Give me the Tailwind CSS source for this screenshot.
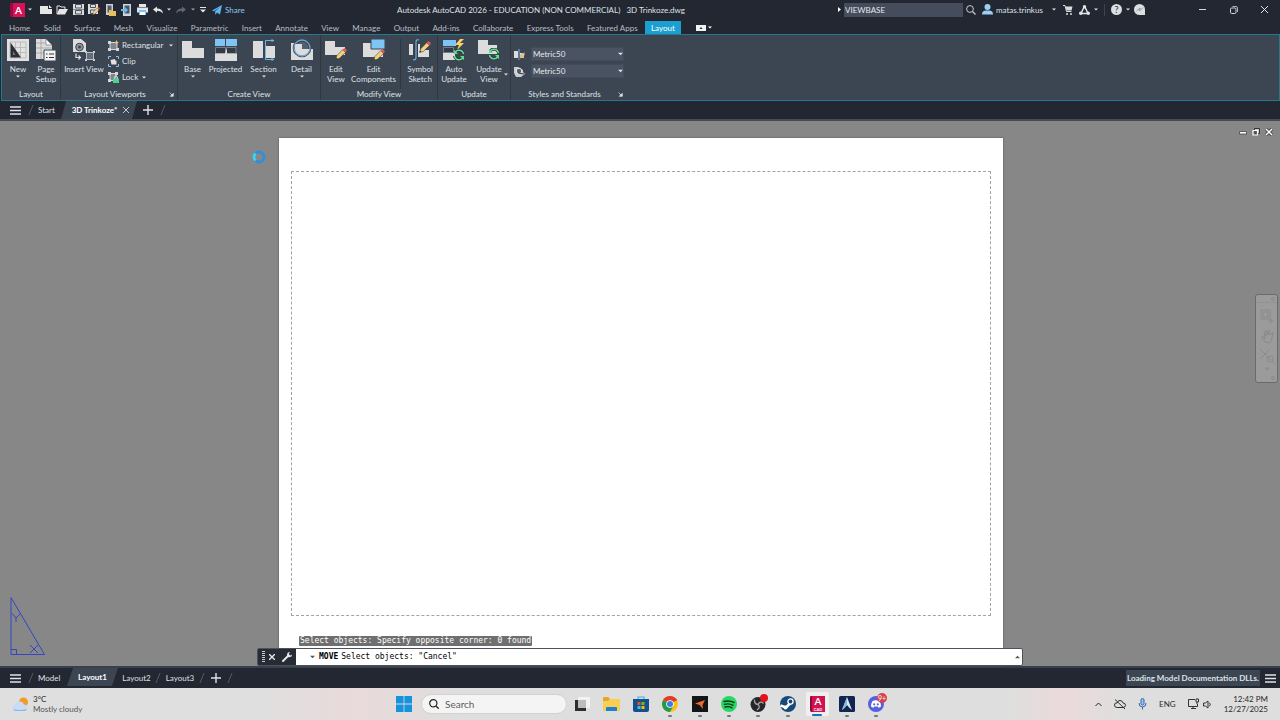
<!DOCTYPE html>
<html lang="en">
<head>
  <meta charset="UTF-8">
  <meta name="viewport" content="width=device-width, initial-scale=1.0">
  <title>Autodesk AutoCAD 2026 - 3D Trinkoze.dwg</title>
  <script src="https://cdn.jsdelivr.net/npm/@tailwindcss/browser@4"></script>
</head>
<body class="h-screen flex flex-col overflow-hidden bg-[#222731] text-[#dfe2e6] text-[8px] leading-[10px] font-['Lato','Open_Sans',sans-serif]">

  <!-- Shared symbols -->
  <svg class="hidden">
    <symbol id="caret" viewBox="0 0 4 3"><path d="M0 .5h4L2 2.5z" fill="currentColor"/></symbol>
    <symbol id="burger" viewBox="0 0 11 9"><path d="M0 1h11M0 4.5h11M0 8h11" stroke="currentColor" stroke-width="1.4"/></symbol>
    <symbol id="slash" viewBox="0 0 6 12"><path d="M1 11L5 1" stroke="#525a67" stroke-width="1"/></symbol>
    <symbol id="plus" viewBox="0 0 10 10"><path d="M5 0v10M0 5h10" stroke="currentColor" stroke-width="1.4"/></symbol>
    <symbol id="pencil" viewBox="0 0 11 11"><path d="M.5 10.5L1.6 7 7 1.6 9.6 4.1 4.1 9.5z" fill="#f5cf7d" stroke="#2c323c" stroke-width=".5"/><path d="M7 1.6L8.2.5q.8-.5 1.6.2l.7.7q.6.8 0 1.5L9.6 4.1z" fill="#e4574f"/><path d="M.5 10.5l.6-1.8 1.2 1.2z" fill="#2c323c"/></symbol>
    <symbol id="refresh" viewBox="0 0 12 12"><path d="M10.6 5A4.8 4.8 0 0 0 2 3.2M1.4 7A4.8 4.8 0 0 0 10 8.8" fill="none" stroke="#2c323c" stroke-width="3"/><path d="M10.6 5A4.8 4.8 0 0 0 2 3.2M1.4 7A4.8 4.8 0 0 0 10 8.8" fill="none" stroke="#5fdc8c" stroke-width="1.5"/><path d="M1 .8V5h4zM11 11.2V7H7z" fill="#5fdc8c"/></symbol>
    <symbol id="launcher" viewBox="0 0 5 5"><path d="M.5.5l3 3M4.3 1.3v3h-3z" fill="currentColor" stroke="currentColor" stroke-width=".7"/></symbol>
  </svg>

  <!-- Title bar -->
  <header class="h-[19px] shrink-0 flex items-center">
    <div class="w-[246px] flex items-center pl-[10px]">
      <button aria-label="Application menu" class="flex items-center gap-[2px] w-[28px]">
        <svg class="w-4 h-[14px]" viewBox="0 0 16 14"><path d="M1 0h14v14H1l-1-2V1z" fill="#d81159"/><path d="M0 1l1-1h2v14H1l-1-2z" fill="#9d0b3e"/><text x="8.5" y="10.5" text-anchor="middle" font-size="10" font-weight="700" fill="#fff">A</text></svg>
        <svg class="w-1 h-[3px]"><use href="#caret"/></svg>
      </button>
      <button aria-label="New" class="w-4 flex justify-center"><svg class="w-3 h-[10px]" viewBox="0 0 12 10"><path d="M0 1h8v3h4v5H0z" fill="#e6e6e6"/><path d="M9 0l3 3H9z" fill="#e6e6e6"/></svg></button>
      <button aria-label="Open" class="w-4 flex justify-center"><svg class="w-3 h-[10px]" viewBox="0 0 12 10"><path d="M1 9V1h3l1 1h4v2" fill="none" stroke="#e6e6e6"/><path d="M3 4h9L9 9.500H.8z" fill="#e6e6e6"/></svg></button>
      <button aria-label="Save" class="w-4 flex justify-center"><svg class="w-[11px] h-[11px]" viewBox="0 0 11 11"><path d="M0 0h11v11H0z" fill="#dcdcdc"/><path d="M2.500.500h6v3.500h-6zM2.500 6.500h6V10h-6z" fill="#dcdcdc" stroke="#4a515c"/><path d="M0 5.500h11" stroke="#4a515c" stroke-width=".6"/></svg></button>
      <button aria-label="Save as" class="w-4 flex justify-center"><svg class="w-3 h-[11px]" viewBox="0 0 12 11"><path d="M0 0h10v10H0z" fill="#dcdcdc"/><path d="M2.500.500h5v3h-5zM2.500 6h5v3.500h-5z" fill="#dcdcdc" stroke="#4a515c"/><use href="#pencil" x="4" y="3" width="8" height="8"/></svg></button>
      <button aria-label="Open from web" class="w-4 flex justify-center"><svg class="w-[11px] h-[12px]" viewBox="0 0 11 12"><path d="M1 0h7v11H1z" fill="#cfcfcf"/><path d="M2.500 1.500h4v7h-4z" fill="#555b66"/><path d="M4 6h2l1 1h4v5H4z" fill="#e9bf5e"/></svg></button>
      <button aria-label="Save to web" class="w-4 flex justify-center"><svg class="w-[10px] h-[12px]" viewBox="0 0 10 12"><path d="M2 0h8v12H2z" fill="#cfd6dc"/><path d="M3.500 1.500h5v8h-5z" fill="#3f5870"/><path d="M0 5h4V3l3 3-3 3V7H0z" fill="#6bb8ee"/></svg></button>
      <button aria-label="Plot" class="w-4 flex justify-center"><svg class="w-[11px] h-[11px]" viewBox="0 0 11 11"><path d="M2 0h7v3H2zM0 3.500h11v5H0z" fill="#e6e6e6"/><path d="M2 6h7v5H2z" fill="#7cc5f5"/><path d="M3 8h5v3H3z" fill="#fff"/></svg></button>
      <button aria-label="Undo" class="w-4 flex justify-center"><svg class="w-[10px] h-[8px]" viewBox="0 0 10 8"><path d="M0 3.500L4 .500V2.500Q9.500 2.500 10 7.500 8 4.500 4 4.700v2z" fill="#e6e6e6"/></svg></button>
      <svg class="w-1 h-[3px] mx-[1px]"><use href="#caret"/></svg>
      <button aria-label="Redo" class="w-[18px] flex justify-center text-[#606874]"><svg class="w-[10px] h-[8px]" viewBox="0 0 10 8"><path d="M10 3.500L6 .500V2.500Q.500 2.500 0 7.500 2 4.500 6 4.700v2z" fill="currentColor"/></svg></button>
      <svg class="w-1 h-[3px] mx-[1px] text-[#9aa0a9]"><use href="#caret"/></svg>
      <button aria-label="Customize quick access" class="w-[14px] flex justify-center"><svg class="w-[6px] h-[6px]" viewBox="0 0 6 6"><path d="M0 .500h6" stroke="#e6e6e6"/><path d="M0 2.500h6l-3 3z" fill="#e6e6e6"/></svg></button>
      <button class="flex items-center gap-[3px] ml-[2px] text-[#8cc8f0]"><svg class="w-[10px] h-[10px]" viewBox="0 0 10 10"><path d="M0 5.500L10 0 8 9.500 5 7.500 3.500 10 3 6.500 8 2 2 6.300z" fill="#5fb8f0"/></svg>Share</button>
    </div>
    <h1 class="flex-1 text-center whitespace-pre">Autodesk AutoCAD 2026 - EDUCATION (NON COMMERCIAL)   3D Trinkoze.dwg</h1>
    <div class="w-[444px] flex items-center">
      <button aria-label="Collapse search" class="w-2 pl-[2px]"><svg class="w-[3px] h-[5px]" viewBox="0 0 3 5"><path d="M0 0l3 2.500L0 5z" fill="#fff"/></svg></button>
      <input aria-label="Search" value="VIEWBASE" class="w-[119px] h-[14px] px-px bg-[#454d5c] text-[#e6e9ed]">
      <button aria-label="Find" class="w-4 flex justify-center"><svg class="w-[10px] h-[10px]" viewBox="0 0 10 10"><circle cx="4" cy="4" r="3.400" fill="none" stroke="#c9cdd2"/><path d="M6.500 6.500L9.500 9.500" stroke="#c9cdd2" stroke-width="1.300"/></svg></button>
      <button class="w-[67px] ml-[3px] flex items-center gap-[3px]"><svg class="w-[11px] h-[11px]" viewBox="0 0 11 11"><circle cx="5.500" cy="3" r="3" fill="#9bd0f5"/><path d="M0 10.500Q0 6.500 4 6.500h3q4 0 4 4z" fill="#9bd0f5"/></svg>matas.trinkus</button>
      <svg class="w-1 h-[3px] ml-[3px] mr-[7px]"><use href="#caret"/></svg>
      <button aria-label="App store" class="w-[10px]"><svg class="w-[10px] h-[10px]" viewBox="0 0 10 10"><path d="M0 .500h2l1.500 6h5" fill="none" stroke="#d9dbde"/><path d="M2.500 1.500H9.500L8.500 5.500h-5z" fill="#d9dbde"/><circle cx="4" cy="9" r="1" fill="#d9dbde"/><circle cx="8" cy="9" r="1" fill="#d9dbde"/></svg></button>
      <button aria-label="Autodesk app" class="ml-[6px] flex items-center gap-1"><svg class="w-[11px] h-[10px]" viewBox="0 0 11 10"><path d="M5.500 1L2 8.500M5.500 1L9 8.500M2 8.500h7" fill="none" stroke="#e3e5e8" stroke-width="1.500"/><circle cx="5.500" cy="1.700" r="1.700" fill="#e3e5e8"/><circle cx="1.700" cy="8.300" r="1.700" fill="#e3e5e8"/><circle cx="9.300" cy="8.300" r="1.700" fill="#e3e5e8"/></svg><svg class="w-1 h-[3px]"><use href="#caret"/></svg></button>
      <div class="w-px h-3 bg-[#3d4450] mx-[6px]"></div>
      <button aria-label="Help" class="flex items-center gap-1"><svg class="w-[11px] h-[11px]" viewBox="0 0 11 11"><circle cx="5.500" cy="5.500" r="5.500" fill="#dcdee1"/><text x="5.500" y="8.500" font-size="9" text-anchor="middle" fill="#2b303a">?</text></svg><svg class="w-1 h-[3px]"><use href="#caret"/></svg></button>
      <button aria-label="Assistant" class="ml-1"><svg class="w-[11px] h-[11px]" viewBox="0 0 11 11"><path d="M5.500 0A5.500 5.500 0 0 0 5.500 11H11V5.500A5.500 5.500 0 0 0 5.500 0z" fill="#dcdee1"/><path d="M2.500 7L6 4l-.5 3L9 3.500" fill="none" stroke="#9297a0"/></svg></button>
      <div class="ml-auto flex">
        <button aria-label="Minimize" class="w-[31px] flex justify-center items-center"><svg class="w-[7px] h-[7px]" viewBox="0 0 7 7"><path d="M0 3.500h7" stroke="#d5d7da"/></svg></button>
        <button aria-label="Restore" class="w-[31px] flex justify-center items-center"><svg class="w-[8px] h-[8px]" viewBox="0 0 8 8"><rect x=".5" y="2" width="5.500" height="5.500" rx="1.200" fill="none" stroke="#d5d7da"/><path d="M2.500.500H6Q7.500.500 7.500 2v4" fill="none" stroke="#d5d7da" stroke-width=".8"/></svg></button>
        <button aria-label="Close" class="w-[31px] flex justify-center items-center"><svg class="w-[7px] h-[7px]" viewBox="0 0 7 7"><path d="M0 0l7 7M7 0L0 7" stroke="#e3e5e8"/></svg></button>
      </div>
    </div>
  </header>

  <!-- Ribbon tabs -->
  <nav class="h-[15px] shrink-0 flex items-end text-[#b9bec6]">
    <div class="w-[681px] pl-[2px] flex justify-between">
      <button class="h-[13px] pl-[7px]">Home</button>
      <button class="h-[13px]">Solid</button>
      <button class="h-[13px]">Surface</button>
      <button class="h-[13px]">Mesh</button>
      <button class="h-[13px]">Visualize</button>
      <button class="h-[13px]">Parametric</button>
      <button class="h-[13px]">Insert</button>
      <button class="h-[13px]">Annotate</button>
      <button class="h-[13px]">View</button>
      <button class="h-[13px]">Manage</button>
      <button class="h-[13px]">Output</button>
      <button class="h-[13px]">Add-ins</button>
      <button class="h-[13px]">Collaborate</button>
      <button class="h-[13px]">Express Tools</button>
      <button class="h-[13px]">Featured Apps</button>
      <button class="h-[13px] px-[6px] ml-[-6px] bg-[#1b9fd0] text-white">Layout</button>
    </div>
    <button aria-label="Minimize ribbon" class="h-[13px] ml-[15px] flex items-center gap-[2px]"><svg class="w-[10px] h-[6px]" viewBox="0 0 10 6"><path d="M0 0h10v6H0z" fill="#f2f2f2"/><path d="M3.500 4L5 2l1.500 2z" fill="#222731"/></svg><svg class="w-1 h-[3px] text-white"><use href="#caret"/></svg></button>
  </nav>

  <!-- Ribbon -->
  <section class="h-[67px] shrink-0 flex bg-[#3c4552] border border-[#26788c] ml-px">
    <div class="w-[59px] border-r border-[#2f3742] flex flex-col">
      <div class="flex-1 flex pt-1 pl-[2px]">
        <button class="w-7 flex flex-col items-center">
          <svg class="w-[22px] h-[22px] mb-[3px]" viewBox="0 0 22 22"><path d="M0 0h22v22H0z" fill="#e2e2e2"/><path d="M3 3h16v16H3zM3 8.500h16M3 13.500h16M8.500 3v16M13.500 3v16" fill="none" stroke="#b4b4b4" stroke-width=".8"/><path d="M3.500 3.500L14 18.500H3.500z" fill="#2b2f36"/><path d="M6 12l2.500 4H6z" fill="#777"/></svg>
          New<svg class="w-1 h-[3px] mt-[1px]"><use href="#caret"/></svg>
        </button>
        <button class="w-7 flex flex-col items-center">
          <svg class="w-[20px] h-[22px] mb-[3px]" viewBox="0 0 20 22"><path d="M0 0h10l6 6v14H0z" fill="#dcdcdc"/><path d="M10 0v6h6z" fill="#fff" stroke="#59616d" stroke-width=".6"/><path d="M0 4h9M0 9h16M0 14h8M5 0v20" stroke="#9a9a9a" stroke-width=".7"/><path d="M8 11h12v11H8z" fill="#f2f2f2" stroke="#3c4552"/><path d="M10 15h1.500M13 15h5M10 18.500h1.500M13 18.500h5" stroke="#333"/></svg>
          <span>Page<br>Setup</span>
        </button>
      </div>
      <div class="h-[11px] text-center">Layout</div>
    </div>

    <div class="w-[117px] border-r border-[#2f3742] flex flex-col">
      <div class="flex-1 flex pt-1 pl-px">
        <button class="w-[44px] flex flex-col items-center whitespace-nowrap">
          <svg class="w-[22px] h-[22px] mb-[3px]" viewBox="0 0 22 22"><path d="M0 0h8l5 4v9H0z" fill="#dcdcdc"/><circle cx="6.500" cy="8" r="3.800" fill="#8e959f" stroke="#3c4552"/><circle cx="6.500" cy="8" r="1.500" fill="#3c4552"/><path d="M3 14.500v4h4M5.500 16.500l2 2-2 2" fill="none" stroke="#e2e2e2" stroke-width="1.200"/><path d="M13.500 13.500h7v7h-7z" fill="#666e79" stroke="#b9bdc3"/><path d="M12 12h2v2h-2zM20 12h2v2h-2zM12 20h2v2h-2zM20 20h2v2h-2z" fill="#c9ccd0"/></svg>
          Insert View
        </button>
        <div class="flex flex-col pl-[2px] gap-1">
          <button class="h-3 flex items-center gap-[3px]"><svg class="w-[11px] h-[11px]" viewBox="0 0 11 11"><path d="M2 2.500h7v7H2z" fill="#7d858f" stroke="#d5d7da"/><path d="M0 1h3v3H0zM0 8h3v3H0zM8 8h3v3H8z" fill="#d5d7da"/><path d="M8.500 0l.8 1.700 1.700.8-1.700.8-.8 1.700-.8-1.700-1.700-.8 1.700-.8z" fill="#ffbf60"/></svg>Rectangular<svg class="w-1 h-[3px] ml-[2px]"><use href="#caret"/></svg></button>
          <button class="h-3 flex items-center gap-[3px]"><svg class="w-[11px] h-[11px]" viewBox="0 0 11 11"><path d="M.500 3V.500H3M8 .500h2.500V3M10.500 8v2.500H8M3 10.500H.500V8" fill="none" stroke="#85c5f0"/><path d="M2.500 4L7 3v1.500h1.500v4h-5z" fill="#e2e2e2"/></svg>Clip</button>
          <button class="h-3 flex items-center gap-[3px]"><svg class="w-[11px] h-[11px]" viewBox="0 0 11 11"><path d="M2 1.500h6v7H2z" fill="#7d858f" stroke="#d5d7da"/><path d="M0 0h3v3H0zM7 0h3v3H7zM0 7h3v3H0z" fill="#d5d7da"/><path d="M6.500 7V5.500q0-1.500 1.500-1.500t1.500 1.500V7" fill="none" stroke="#e2e2e2"/><path d="M5 6.500h6V11H5z" fill="#4fd08b"/></svg>Lock<svg class="w-1 h-[3px] ml-px"><use href="#caret"/></svg></button>
        </div>
      </div>
      <div class="h-[11px] flex items-start"><span class="flex-1 text-center">Layout Viewports</span><button aria-label="Viewport settings" class="pt-[3px] pr-[3px]"><svg class="w-[5px] h-[5px]"><use href="#launcher"/></svg></button></div>
    </div>

    <div class="w-[143px] border-r border-[#2f3742] flex flex-col">
      <div class="flex-1 flex pt-1">
        <button class="w-[29px] flex flex-col items-center">
          <svg class="w-[22px] h-[22px] mb-[3px]" viewBox="0 0 22 22"><path d="M0 2h10v7h12v10H0z" fill="#dcdcdc"/></svg>
          Base<svg class="w-1 h-[3px] mt-[1px]"><use href="#caret"/></svg>
        </button>
        <button class="w-[37px] flex flex-col items-center">
          <svg class="w-[22px] h-[22px] mb-[3px]" viewBox="0 0 22 22"><path d="M0 0h10v7H0zM11 0h11v7H11z" fill="#7cc5f5"/><path d="M.500 8.500h10v6H.500zM11.500 8.500h9.500v6h-9.500z" fill="#343b46" stroke="#747c87"/><path d="M0 14.500h10l1-4h1v4h10V22H0z" fill="#dcdcdc"/></svg>
          Projected
        </button>
        <button class="w-[39px] flex flex-col items-center">
          <svg class="w-[22px] h-[22px] mb-[3px]" viewBox="0 0 22 22"><path d="M0 2h10v5h12v12H0z" fill="#dcdcdc"/><path d="M11 2v18" stroke="#3c4552" stroke-width="2"/><path d="M12.500 1.500v19M12.500 1.500h8M12.500 20.500h8" fill="none" stroke="#6fb6e8"/><path d="M18.500 0l3 1.500-3 1.700zM18.500 18.800l3 1.700-3 1.500z" fill="#6fb6e8"/></svg>
          Section<svg class="w-1 h-[3px] mt-[1px]"><use href="#caret"/></svg>
        </button>
        <button class="w-[37px] flex flex-col items-center">
          <svg class="w-[22px] h-[22px] mb-[3px]" viewBox="0 0 22 22"><path d="M0 4h8v6h14v11H0z" fill="#dcdcdc"/><circle cx="11" cy="9" r="7.800" fill="#565e6a" stroke="#3c4552" stroke-width="3"/><path d="M4 5h7v5h7.500a7.500 7.500 0 0 1-14.500 2z" fill="#dcdcdc"/><circle cx="11" cy="9" r="8" fill="none" stroke="#6ba6d8" stroke-width="1.300"/></svg>
          Detail<svg class="w-1 h-[3px] mt-[1px]"><use href="#caret"/></svg>
        </button>
      </div>
      <div class="h-[11px] text-center">Create View</div>
    </div>

    <div class="w-[117px] border-r border-[#2f3742] flex flex-col">
      <div class="flex-1 flex pt-1">
        <button class="w-[30px] flex flex-col items-center">
          <svg class="w-[22px] h-[22px] mb-[3px]" viewBox="0 0 22 22"><path d="M0 2h10v6h10v8H0z" fill="#dcdcdc"/><use href="#pencil" x="10" y="9" width="12" height="12"/></svg>
          <span>Edit<br>View</span>
        </button>
        <button class="w-[46px] flex flex-col items-center">
          <svg class="w-[22px] h-[22px] mb-[3px]" viewBox="0 0 22 22"><path d="M0 4h9v6h11v8H0z" fill="#dcdcdc"/><path d="M8 0h14v10H8z" fill="#7cc5f5" stroke="#3c4552"/><use href="#pencil" x="10" y="10" width="12" height="12"/></svg>
          <span>Edit<br>Components</span>
        </button>
        <div class="w-px bg-[#2f3742] ml-1"></div>
        <button class="w-[36px] pl-[2px] flex flex-col items-center">
          <svg class="w-[22px] h-[22px] mb-[3px]" viewBox="0 0 22 22"><path d="M0 5h4v11H0zM9 5h2v6h9v7H9z" fill="#dcdcdc"/><path d="M5 2h4v17H5z" fill="#343b46"/><path d="M10 1q-3-1-3 2v15q0 4-3 2.500" fill="none" stroke="#6fb6e8" stroke-width="1.200"/><use href="#pencil" x="10" y="2" width="12" height="12"/></svg>
          <span>Symbol<br>Sketch</span>
        </button>
      </div>
      <div class="h-[11px] text-center">Modify View</div>
    </div>

    <div class="w-[73px] border-r border-[#2f3742] flex flex-col">
      <div class="flex-1 flex pt-1">
        <button class="w-[32px] flex flex-col items-center">
          <svg class="w-[22px] h-[22px] mb-[3px]" viewBox="0 0 22 22"><path d="M0 1h13v6H0z" fill="#7cc5f5"/><path d="M.500 8.500h10v5H.500z" fill="#343b46" stroke="#747c87"/><path d="M0 14h12v7H0z" fill="#dcdcdc"/><path d="M17 0l-5 6h4l-2 5 7-7h-4l4-4z" fill="#fbcf6c"/><use href="#refresh" x="10" y="10" width="12" height="12"/></svg>
          <span>Auto<br>Update</span>
        </button>
        <button class="w-[38px] flex flex-col items-center relative">
          <svg class="w-[22px] h-[22px] mb-[3px]" viewBox="0 0 22 22"><path d="M0 1h10v5h9v9H0z" fill="#dcdcdc"/><use href="#refresh" x="10" y="9" width="12" height="12"/></svg>
          <span>Update<br>View</span><svg class="w-1 h-[3px] absolute right-0 top-[34px]"><use href="#caret"/></svg>
        </button>
      </div>
      <div class="h-[11px] text-center">Update</div>
    </div>

    <div class="w-[115px] flex flex-col">
      <div class="flex-1 pt-3 pl-[3px] flex flex-col gap-[3px]">
        <label class="flex items-center gap-[6px] relative"><svg class="w-[11px] h-[11px]" viewBox="0 0 11 11"><path d="M0 2h4v7H0zM6 4h4v5H6z" fill="#dcdcdc"/><path d="M5 0v11" stroke="#6fb6e8"/><use href="#pencil" x="5" y="3" width="7" height="7"/></svg>
          <select aria-label="Section view style" class="appearance-none w-[93px] h-[14px] px-px bg-[#4a5362] border border-[#424b59] text-[#e6e9ed]"><option>Metric50</option></select>
          <svg class="w-[5px] h-1 absolute right-[3px] top-[5px] pointer-events-none"><use href="#caret"/></svg></label>
        <label class="flex items-center gap-[6px] relative"><svg class="w-[11px] h-[11px]" viewBox="0 0 11 11"><path d="M0 1h4l5 3v2l2 2-4 3H2L0 7z" fill="#c9ccd0"/><circle cx="5" cy="5" r="2.800" fill="#565e6a" stroke="#eee"/><path d="M4 7l6 1" stroke="#343b46"/></svg>
          <select aria-label="Detail view style" class="appearance-none w-[93px] h-[14px] px-px bg-[#4a5362] border border-[#424b59] text-[#e6e9ed]"><option>Metric50</option></select>
          <svg class="w-[5px] h-1 absolute right-[3px] top-[5px] pointer-events-none"><use href="#caret"/></svg></label>
      </div>
      <div class="h-[11px] flex items-start"><span class="flex-1 text-center">Styles and Standards</span><button aria-label="Styles settings" class="pt-[3px] pr-[3px]"><svg class="w-[5px] h-[5px]"><use href="#launcher"/></svg></button></div>
    </div>
  </section>

  <!-- File tabs -->
  <nav class="h-[20px] shrink-0 flex items-center pl-[10px] border-b-2 border-[#444c56]">
    <button aria-label="File tab menu"><svg class="w-[11px] h-[9px]"><use href="#burger"/></svg></button>
    <svg class="w-[6px] h-3 ml-[7px] mr-1"><use href="#slash"/></svg>
    <button class="w-[23px] text-left">Start</button>
    <div class="h-[18px] w-[76px] pl-[3px] flex items-center justify-center gap-[6px] bg-[#3c4552] [clip-path:polygon(5px_0,100%_0,calc(100%-5px)_100%,0_100%)]"><button class="font-bold text-white whitespace-nowrap">3D Trinkoze*</button><button aria-label="Close tab"><svg class="w-[6px] h-[6px]" viewBox="0 0 6 6"><path d="M0 0l6 6M6 0L0 6" stroke="#c4c8ce"/></svg></button></div>
    <button aria-label="New tab" class="ml-[6px]"><svg class="w-[10px] h-[10px]"><use href="#plus"/></svg></button>
    <svg class="w-[6px] h-3 ml-[7px]"><use href="#slash"/></svg>
  </nav>

  <!-- Paper space -->
  <main class="flex-1 relative flex justify-center bg-[#878787] pl-[2px] pt-[17px]">
    <div class="w-[724px] bg-white shadow-[0_0_2px_#555] px-3 pt-[33px]">
      <div class="h-[445px] border border-dashed border-[#a3a3a3]"></div>
    </div>

    <!-- Busy cursor -->
    <svg class="absolute left-[252px] top-[29px] w-[14px] h-[14px]" viewBox="0 0 14 14"><circle cx="7" cy="7" r="5" fill="none" stroke="#2f8fdc" stroke-width="3"/><path d="M3.500 10.500A5 5 0 0 1 3.500 3.500" fill="none" stroke="#45d3ea" stroke-width="3"/></svg>

    <!-- Drawing window controls -->
    <div class="absolute right-[7px] top-[7px] flex items-center gap-[5px]">
      <button aria-label="Minimize drawing"><svg class="w-2 h-2" viewBox="0 0 8 8"><path d="M.500 3.500h7v2.500h-7z" fill="#fff" stroke="#444" stroke-width=".8"/></svg></button>
      <button aria-label="Restore drawing"><svg class="w-2 h-2" viewBox="0 0 8 8"><path d="M2.500 .500h5v5h-5z" fill="#ccc" stroke="#333"/><path d="M1 2.500h4.500V7H1z" fill="#555" stroke="#fff" stroke-width="1.200"/></svg></button>
      <button aria-label="Close drawing"><svg class="w-2 h-2" viewBox="0 0 8 8"><path d="M1 1l6 6M7 1L1 7" stroke="#333" stroke-width="3"/><path d="M1 1l6 6M7 1L1 7" stroke="#fff" stroke-width="1.500"/></svg></button>
    </div>

    <!-- Navigation bar -->
    <div class="absolute right-[2px] top-[173px] w-[23px] h-[89px] rounded-[3px] bg-[#9b9b9b] border border-[#6a6a6a]">
      <svg class="w-full h-full" viewBox="0 0 21 87" fill="none" stroke="#8a8a8a"><circle cx="17" cy="4" r="1.500"/><path d="M0 7.500h21" stroke="#929292"/><path d="M5 15h9v9H5zM7 17h5v5H7zM12 26h6M15 23v5M9 47q-4-4-3-6l3 3-1-7 2 4V35l2 5 1-5 1 5 3-3-1 6q-1 4-3 5zM4 54l11 11M14 54L4 64"/><circle cx="14" cy="64" r="3"/><path d="M16 66l3 3M9 73h4l-2 2z"/><circle cx="17" cy="83" r="1.500"/></svg>
    </div>

    <!-- UCS icon -->
    <svg class="absolute left-[10px] bottom-[10px] w-9 h-[60px]" viewBox="0 0 36 60" fill="none" stroke="#3146c4"><path d="M1 1.500V58.500H34.500zM1 53.500h5.500v5M2 17.500l4 4.500 4.500-4.500M6 22v4M20 49l8 8M28 49l-8 8"/></svg>

    <!-- Command line -->
    <div class="absolute left-1/2 -translate-x-1/2 bottom-0 w-[766px] font-['DejaVu_Sans_Mono',monospace]">
      <p class="w-fit ml-[42px] mb-[2px] px-px bg-[#6f6f6f] text-white rounded-[1px]">Select objects: Specify opposite corner: 0 found</p>
      <div class="h-[18px] flex items-center bg-white border border-[#4b525e] rounded-[2px] text-black">
        <div class="h-full w-[38px] bg-[#262b36] flex items-center justify-between px-1">
          <svg class="w-[3px] h-3" viewBox="0 0 3 12"><path d="M0 .500h3M0 2.500h3M0 4.500h3M0 6.500h3M0 8.500h3M0 10.500h3" stroke="#c9ccd0"/></svg>
          <button aria-label="Close command line" class="pr-[3px]"><svg class="w-[6px] h-[6px]" viewBox="0 0 6 6"><path d="M0 0l6 6M6 0L0 6" stroke="#e6e6e6" stroke-width="1.400"/></svg></button>
          <button aria-label="Customize"><svg class="w-[10px] h-[10px]" viewBox="0 0 10 10"><path d="M1 9l5-5" stroke="#e6e6e6" stroke-width="2" stroke-linecap="round"/><path d="M8 0Q5 0 5 3t3 2q2 0 2-2.500L8.300 3.500 6.800 2z" fill="#e6e6e6"/></svg></button>
        </div>
        <svg class="w-[5px] h-1 ml-[14px] mr-1 text-[#555]"><use href="#caret"/></svg>
        <label for="cmd" class="font-bold">MOVE</label>
        <input id="cmd" value='Select objects: "Cancel"' class="flex-1 ml-[3px] bg-transparent">
        <button aria-label="Command history" class="px-[2px]"><svg class="w-[5px] h-1 rotate-180 text-[#555]"><use href="#caret"/></svg></button>
      </div>
    </div>
  </main>

  <!-- Layout tabs and status -->
  <footer class="h-[22px] shrink-0 flex items-center pl-[10px] pr-1 border-t-2 border-[#38404c]">
    <button aria-label="Layout menu"><svg class="w-[11px] h-[9px]"><use href="#burger"/></svg></button>
    <svg class="w-[6px] h-3 ml-[7px] mr-1"><use href="#slash"/></svg>
    <button class="w-[29px] pb-px text-left">Model</button>
    <button class="h-[18px] mb-[2px] w-[51px] font-bold text-white bg-[#3c4552] [clip-path:polygon(6px_0,100%_0,calc(100%-6px)_100%,0_100%)]">Layout1</button>
    <button class="w-[37px] pb-px text-center">Layout2</button>
    <svg class="w-[6px] h-3"><use href="#slash"/></svg>
    <button class="w-[38px] pb-px text-center">Layout3</button>
    <svg class="w-[6px] h-3"><use href="#slash"/></svg>
    <button aria-label="New layout" class="ml-[6px]"><svg class="w-[10px] h-[10px]"><use href="#plus"/></svg></button>
    <svg class="w-[6px] h-3 ml-[6px]"><use href="#slash"/></svg>
    <p class="ml-auto h-4 px-px flex items-center bg-[#3c4552] font-bold">Loading Model Documentation DLLs.</p>
    <button aria-label="Customization" class="ml-[5px]"><svg class="w-[11px] h-[9px]"><use href="#burger"/></svg></button>
  </footer>

  <!-- Taskbar -->
  <div class="h-8 shrink-0 grid grid-cols-[1fr_auto_1fr] items-center bg-linear-to-r from-[#dfdfdf] from-20% via-[#e9d9da] via-28% to-[#dedede] to-36% text-[#2a2a2a]">
    <button class="justify-self-start flex items-center gap-[5px] pl-3 text-left">
      <svg class="w-4 h-[15px]" viewBox="0 0 16 15"><circle cx="11.500" cy="5" r="4.500" fill="#f39a2b"/><path d="M4 14a3.700 3.700 0 0 1-.3-7.200A4.600 4.600 0 0 1 12 7.500 3.300 3.300 0 0 1 12.500 14z" fill="#c7dcf7"/><path d="M1 12q6 2 14 0-1 2-2.500 2H4q-2 0-3-2z" fill="#8fb4ea"/></svg>
      <span>3°C<br><span class="text-[#555]">Mostly cloudy</span></span>
    </button>

    <div class="flex items-center pl-[2px]">
      <button aria-label="Start" class="w-[30px] pl-[5px] flex"><svg class="w-4 h-4" viewBox="0 0 16 16"><path d="M0 0h7.600v7.600H0zM8.400 0H16v7.600H8.400zM0 8.400h7.600V16H0zM8.400 8.400H16V16H8.400z" fill="#1593dc"/></svg></button>
      <label class="w-[146px] h-5 rounded-full bg-[#f5f4f4] border border-[#d2d0d0] flex items-center gap-[6px] pl-[7px]"><svg class="w-[10px] h-[10px] shrink-0" viewBox="0 0 10 10"><circle cx="4.300" cy="4.300" r="3.600" fill="none" stroke="#222" stroke-width="1.200"/><path d="M7 7l2.700 2.700" stroke="#222" stroke-width="1.300"/></svg><input aria-label="Search Windows" placeholder="Search" class="w-20 text-[10px] placeholder:text-[#5c5c5c]"></label>
      <div class="grid grid-cols-11 w-[324px] h-8">
        <button aria-label="Task view" class="flex flex-col items-center pt-2"><svg class="w-4 h-4" viewBox="0 0 16 16"><path d="M4 1h12v11H4z" fill="#f2f2f2"/><path d="M1 4h11v11H1z" fill="#2d2d2d"/><path d="M4 4h8v8H4z" fill="#bcbcbc"/></svg></button>
        <button aria-label="File Explorer" class="flex flex-col items-center pt-2"><svg class="w-[17px] h-4" viewBox="0 0 17 16"><path d="M0 2q0-1 1-1h4l2 2h9q1 0 1 1v10q0 1-1 1H1q-1 0-1-1z" fill="#f8cf52"/><path d="M0 2q0-1 1-1h4l2 2-2 2H0z" fill="#e0a92c"/><path d="M3 15v-3q0-1 1-1h9q1 0 1 1v3z" fill="#1f7fd0"/></svg></button>
        <button aria-label="Microsoft Store" class="flex flex-col items-center pt-2"><svg class="w-4 h-4" viewBox="0 0 16 16"><path d="M5 4V1h6v3" fill="none" stroke="#3ab2f0" stroke-width="1.200"/><path d="M0 3h16v11q0 2-2 2H2q-2 0-2-2z" fill="#14508c"/><path d="M4.500 6h3v3h-3z" fill="#f25022"/><path d="M8.500 6h3v3h-3z" fill="#7fba00"/><path d="M4.500 10h3v3h-3z" fill="#3ac0f0"/><path d="M8.500 10h3v3h-3z" fill="#ffb900"/></svg></button>
        <button aria-label="Chrome" class="flex flex-col items-center pt-2"><svg class="w-4 h-4" viewBox="0 0 16 16"><circle cx="8" cy="8" r="8" fill="#fbc116"/><path d="M8 8L1.100 4A8 8 0 0 1 14.900 4z" fill="#e33b2e"/><path d="M8 8v0L1.100 4A8 8 0 0 0 8 16l3.400-6z" fill="#229a4b"/><path d="M8 4h7" stroke="#e33b2e"/><circle cx="8" cy="8" r="3.800" fill="#fff"/><circle cx="8" cy="8" r="3" fill="#3a7de8"/></svg><span class="mt-[3px] w-1 h-[2px] rounded-full bg-[#777]"></span></button>
        <button aria-label="Capture app" class="flex flex-col items-center pt-2"><svg class="w-4 h-4" viewBox="0 0 16 16"><path d="M0 0h16v16H0z" fill="#151515"/><path d="M3 7.500L13 4l-2.500 5 .5 4-3.500-4z" fill="#ef6a32"/></svg><span class="mt-[3px] w-1 h-[2px] rounded-full bg-[#777]"></span></button>
        <button aria-label="Spotify" class="flex flex-col items-center pt-2"><svg class="w-4 h-4" viewBox="0 0 16 16"><circle cx="8" cy="8" r="8" fill="#26d862"/><path d="M3 5.500q5-1.500 10 1M3.500 8.300q4.500-1.300 8.500 1M4 11q4-1 7 .8" fill="none" stroke="#12331d" stroke-width="1.400" stroke-linecap="round"/></svg><span class="mt-[3px] w-1 h-[2px] rounded-full bg-[#777]"></span></button>
        <button aria-label="OBS Studio" class="flex flex-col items-center pt-2"><svg class="w-4 h-4 overflow-visible" viewBox="0 0 16 16"><circle cx="8" cy="8.500" r="7.500" fill="#26262a"/><path d="M8 8.500Q4 8 4.500 3.500M8 8.500q3 2.500-1 5.500M8 8.500q2-4 5.500-1" fill="none" stroke="#a4a4a4" stroke-width="1.300"/><circle cx="14" cy="2" r="4" fill="#e3111c"/></svg><span class="mt-[3px] w-1 h-[2px] rounded-full bg-[#777]"></span></button>
        <button aria-label="Steam" class="flex flex-col items-center pt-2"><svg class="w-4 h-4" viewBox="0 0 16 16"><circle cx="8" cy="8" r="8" fill="#174a78"/><path d="M.500 9.500l5.500 2L10.500 7" fill="none" stroke="#fff" stroke-width="2.500"/><circle cx="10.500" cy="5.500" r="2.600" fill="#174a78" stroke="#fff" stroke-width="1.300"/><circle cx="5.500" cy="11.500" r="2" fill="#fff"/></svg><span class="mt-[3px] w-1 h-[2px] rounded-full bg-[#777]"></span></button>
        <button aria-label="AutoCAD" class="flex flex-col items-center pt-1 my-1 mx-[3px] rounded-[2px] bg-[#f1eeee]"><svg class="w-[15px] h-4" viewBox="0 0 15 16"><path d="M1 0h14v16H1l-1-2V1z" fill="#cf1250"/><path d="M0 1l1-1h1v16H1l-1-2z" fill="#8e0a38"/><text x="8" y="9" font-size="10" font-weight="700" text-anchor="middle" fill="#fff">A</text><text x="8" y="14.500" font-size="4" font-weight="700" text-anchor="middle" fill="#fff">CAD</text></svg><span class="mt-[2px] w-[10px] h-[2px] rounded-full bg-[#1470c0]"></span></button>
        <button aria-label="Arrow app" class="flex flex-col items-center pt-2"><svg class="w-4 h-4" viewBox="0 0 16 16"><rect width="16" height="16" rx="1.500" fill="#10254f"/><path d="M8 1l5 13q-2-1-5-5-3 4-5 5z" fill="#d9e6f4"/><path d="M8 1v8q-3 4-5 5z" fill="#88b5e3"/></svg><span class="mt-[3px] w-1 h-[2px] rounded-full bg-[#777]"></span></button>
        <button aria-label="Discord" class="flex flex-col items-center pt-2"><svg class="w-4 h-4 overflow-visible" viewBox="0 0 16 16"><circle cx="8" cy="8" r="8" fill="#5560e0"/><path d="M4.500 5q3.500-1.500 7 0 1.500 2.500 1.500 5.500-1 1-2.500 1.200l-.8-1.200H6.300l-.8 1.200Q4 11.500 3 10.500 3 7.500 4.500 5z" fill="#fff"/><circle cx="6.200" cy="8.300" r="1.100" fill="#5560e0"/><circle cx="9.800" cy="8.300" r="1.100" fill="#5560e0"/><circle cx="14" cy="2" r="5" fill="#d6404a"/><text x="14" y="4.500" font-size="7" text-anchor="middle" fill="#fff">9+</text></svg><span class="mt-[3px] w-1 h-[2px] rounded-full bg-[#777]"></span></button>
      </div>
    </div>

    <div class="h-full flex items-center justify-end pr-3 bg-linear-to-r from-[#dedede] from-30% via-[#ead9da] via-45% to-[#dedede] to-60%">
      <button aria-label="Hidden icons"><svg class="w-[7px] h-[5px]" viewBox="0 0 7 5"><path d="M.500 4l3-3 3 3" fill="none" stroke="#222"/></svg></button>
      <svg class="w-3 h-3 ml-3" viewBox="0 0 12 12" fill="none" stroke="#333"><path d="M3 9.500Q.500 9.500.500 7T3 5q.500-2.500 3-2.500T9 5q2.500 0 2.500 2.200T9 9.500zM1 1.500l10 9.500"/></svg>
      <svg class="w-[9px] h-3 ml-3" viewBox="0 0 9 12"><rect x="3" y=".5" width="3" height="6.500" rx="1.500" fill="#9fc3ea" stroke="#2c67b0"/><path d="M1 5q0 4 3.500 4T8 5M4.500 9v2.500" fill="none" stroke="#2c67b0"/></svg>
      <span class="ml-3">ENG</span>
      <svg class="w-[11px] h-3 ml-3" viewBox="0 0 11 12" fill="none" stroke="#333"><path d="M7 1.500H.500v7h9V6M3 10.500h5M5 8.500v2M8 1h2.500v3H8zM9 4v2"/></svg>
      <svg class="w-[9px] h-[9px] ml-1" viewBox="0 0 9 9" fill="none" stroke="#333"><path d="M.500 3h2l2.500-2v7L2.500 6h-2zM6.500 2.800q1.500 1.700 0 3.400"/></svg>
      <span class="ml-3 text-right">12:42 PM<br>12/27/2025</span>
    </div>
  </div>

</body>
</html>
